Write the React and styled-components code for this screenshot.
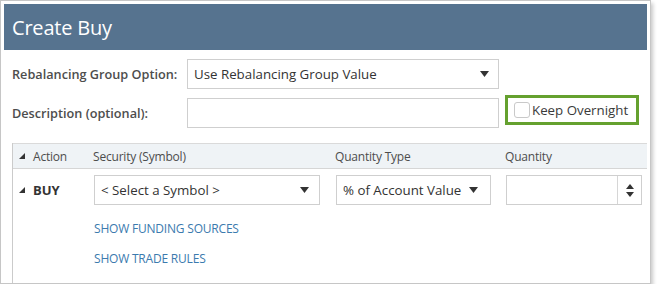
import React from "react";
import styled, { createGlobalStyle } from "styled-components";

const GlobalStyle = createGlobalStyle`
  html, body { margin: 0; padding: 0; background: #fff; }
  body { font-family: "Open Sans", "Noto Sans", sans-serif; color: #333; }
  * { box-sizing: border-box; }
`;

const Frame = styled.div`
  width: 651px;
  height: 284px;
  border: 1px solid #c6c6c6;
  padding: 3px;
  background: #fff;
  box-shadow: 2px 3px 4px rgba(0, 0, 0, 0.22);
  overflow: hidden;
`;

const Header = styled.div`
  height: 46px;
  background: #56738f;
  color: #fff;
  font-size: 20px;
  display: flex;
  align-items: center;
  padding-left: 8px;
  letter-spacing: -0.2px;
`;

const Form = styled.div`
  padding: 9px 0 0 8px;
`;

const FormRow = styled.div`
  display: grid;
  grid-template-columns: 175px 312px auto;
  align-items: center;
  height: 30px;
  margin-bottom: ${(p) => p.$mb || 0}px;
`;

const Label = styled.label`
  font-size: 12.7px;
  font-weight: 600;
  color: #4d4d4d;
`;

const SelectBox = styled.div`
  width: ${(p) => p.$w}px;
  height: 30px;
  border: 1px solid #cfcfcf;
  background: #fff;
  display: flex;
  align-items: center;
  justify-content: space-between;
  padding: 0 ${(p) => p.$pr || 10}px 0 6px;
  font-size: 13.3px;
  color: #333;
`;

const TextBox = styled.div`
  width: ${(p) => p.$w}px;
  height: 30px;
  border: 1px solid #cfcfcf;
  background: #fff;
`;

const KeepBox = styled.div`
  align-self: start;
  margin-top: -3px;
  margin-left: 6px;
  width: 134px;
  height: 30px;
  border: 3px solid #65a12f;
  display: flex;
  align-items: center;
  padding-left: 6px;
  gap: 2px;
  font-size: 13.3px;
  color: #3a3a3a;
`;

const Check = styled.span`
  width: 16px;
  height: 16px;
  border: 1px solid #c9c9c9;
  border-radius: 3px;
  background: #fff;
  display: inline-block;
  flex: none;
`;

const Table = styled.div`
  margin-top: 15px;
  border-left: 1px solid #cbcbcb;
  height: 200px;
`;

const Cols = styled.div`
  display: grid;
  grid-template-columns: 81px 242px 170px 1fr;
  align-items: center;
`;

const HeadRow = styled(Cols)`
  height: 26px;
  background: #eff3f6;
  border-top: 1px solid #dadada;
  border-bottom: 1px solid #d6d6d6;
  font-size: 12px;
  color: #4d4d4d;
  letter-spacing: -0.2px;
`;

const BodyRow = styled(Cols)`
  margin-top: 6px;
  height: 30px;
`;

const ActionCell = styled.div`
  display: flex;
  align-items: center;
  gap: 8px;
  padding-left: 6px;
  font-size: ${(p) => (p.$bold ? 13 : 12)}px;
  font-weight: ${(p) => (p.$bold ? 700 : 400)};
  color: ${(p) => (p.$bold ? "#333" : "#4d4d4d")};
`;

const Cell = styled.div`
  margin-left: ${(p) => p.$ml || 0}px;
`;

const SpinBox = styled.div`
  width: 136px;
  height: 30px;
  border: 1px solid #cfcfcf;
  display: grid;
  grid-template-columns: 1fr 24px;
`;

const SpinBtn = styled.div`
  border-left: 1px solid #d6d6d6;
  display: flex;
  align-items: center;
  justify-content: center;
`;

const Links = styled.div`
  margin-top: 9px;
  padding-left: 81px;
`;

const Link = styled.div`
  height: 30px;
  line-height: 30px;
  font-size: 12px;
  color: #3b7aae;
  letter-spacing: -0.2px;
`;

const SeTriangle = () => (
  <svg width="6" height="6" viewBox="0 0 6 6">
    <polygon points="6,0 6,6 0,6" fill="#333" />
  </svg>
);

const Caret = () => (
  <svg width="9" height="6" viewBox="0 0 9 6">
    <polygon points="0,0 9,0 4.5,6" fill="#333" />
  </svg>
);

const Spinner = () => (
  <svg width="8" height="13" viewBox="0 0 8 13">
    <polygon points="4,0 8,5 0,5" fill="#333" />
    <polygon points="0,8 8,8 4,13" fill="#333" />
  </svg>
);

export default function App() {
  return (
    <>
      <GlobalStyle />
      <Frame>
        <Header>Create Buy</Header>
        <Form>
          <FormRow $mb={9}>
            <Label>Rebalancing Group Option:</Label>
            <SelectBox $w={312} $pr={9}>
              <span>Use Rebalancing Group Value</span>
              <Caret />
            </SelectBox>
          </FormRow>
          <FormRow>
            <Label>Description (optional):</Label>
            <TextBox $w={312} />
            <KeepBox>
              <Check />
              <span>Keep Overnight</span>
            </KeepBox>
          </FormRow>
          <Table>
            <HeadRow>
              <ActionCell>
                <SeTriangle />
                <span>Action</span>
              </ActionCell>
              <Cell $ml={-1}>Security (Symbol)</Cell>
              <Cell $ml={-1}>Quantity Type</Cell>
              <Cell $ml={-1}>Quantity</Cell>
            </HeadRow>
            <BodyRow>
              <ActionCell $bold>
                <SeTriangle />
                <span>BUY</span>
              </ActionCell>
              <Cell>
                <SelectBox $w={226} $pr={10}>
                  <span>&lt; Select a Symbol &gt;</span>
                  <Caret />
                </SelectBox>
              </Cell>
              <Cell>
                <SelectBox $w={155} $pr={12}>
                  <span>% of Account Value</span>
                  <Caret />
                </SelectBox>
              </Cell>
              <Cell>
                <SpinBox>
                  <div />
                  <SpinBtn>
                    <Spinner />
                  </SpinBtn>
                </SpinBox>
              </Cell>
            </BodyRow>
            <Links>
              <Link>SHOW FUNDING SOURCES</Link>
              <Link>SHOW TRADE RULES</Link>
            </Links>
          </Table>
        </Form>
      </Frame>
    </>
  );
}
